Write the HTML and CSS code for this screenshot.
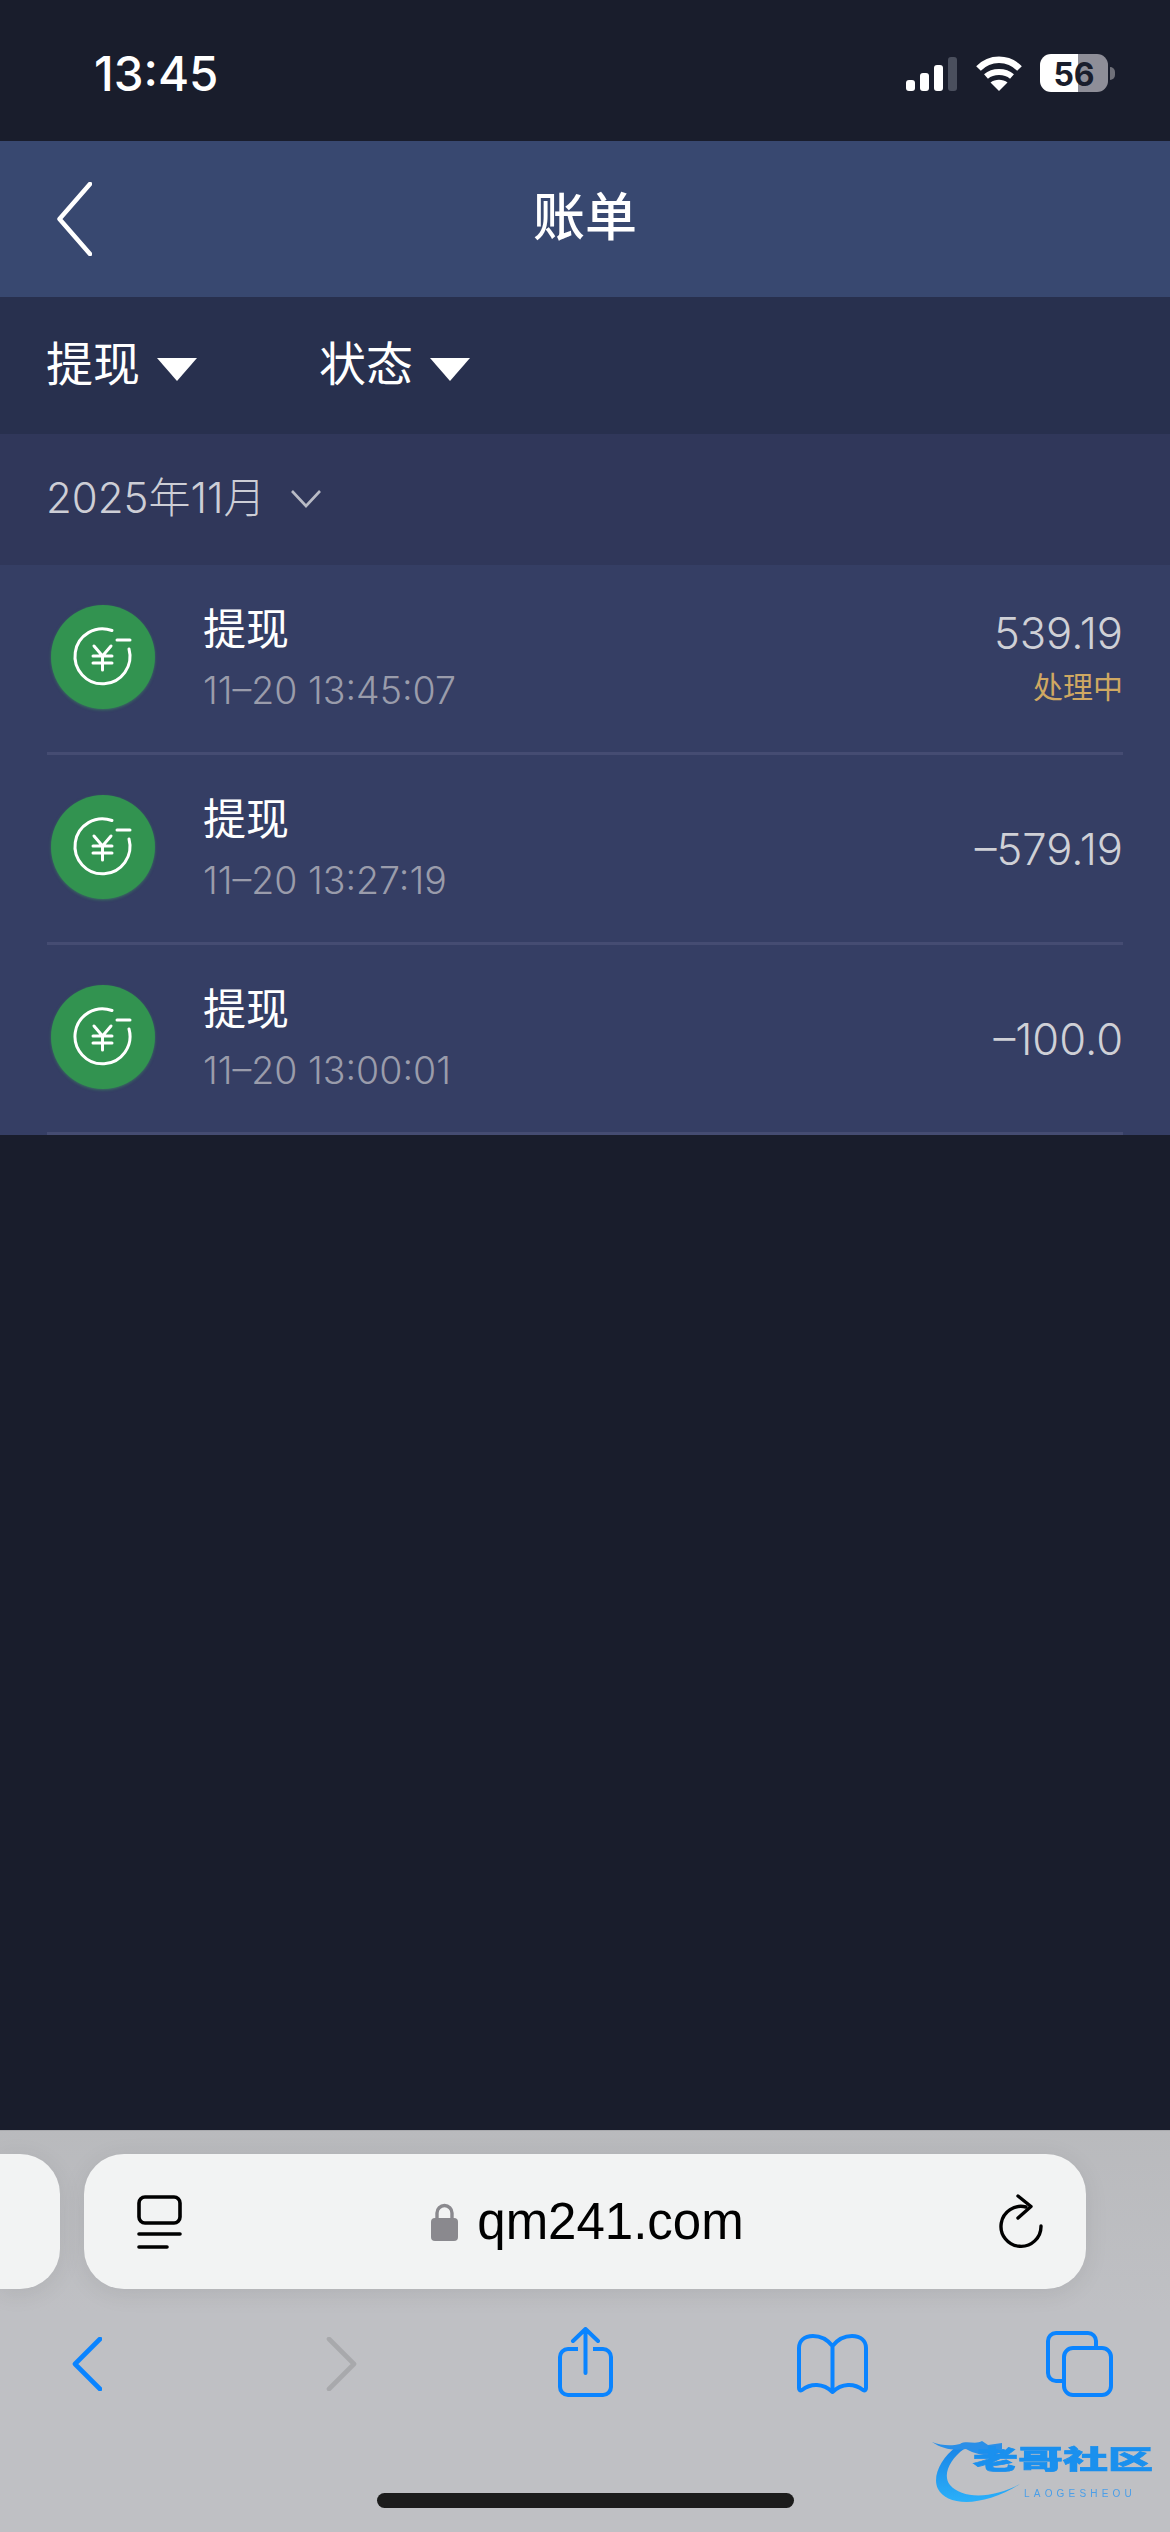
FILE: index.html

```html
<!DOCTYPE html>
<html lang="zh-CN">
<head>
    <meta charset="UTF-8">
    <title>账单</title>
    <meta name="viewport" content="width=device-width, initial-scale=1.0">
    <link rel="stylesheet" href="styles.css">
</head>
<body>
<div class="page">

    <!-- status bar -->
    <div class="status">
        <span class="clock">13:45</span>
        <div class="status-icons">
            <div class="signal">
                <i class="bar1"></i><i class="bar2"></i><i class="bar3"></i><i class="bar4"></i>
            </div>
            <svg class="wifi" width="48" height="35" viewBox="0 0 48 35">
                <path d="M3.5 12.5C15 .8 33 .8 44.5 12.5" fill="none" stroke="#fff" stroke-width="6.5"/>
                <path d="M11 20.5C18 14.5 30 14.5 37 20.5" fill="none" stroke="#fff" stroke-width="6"/>
                <path d="M24 35L15.5 26.5C20 22.8 28 22.8 32.5 26.5Z" fill="#fff"/>
            </svg>
            <div class="battery">
                <div class="battery-body"><span>56</span></div>
                <div class="battery-tip"></div>
            </div>
        </div>
    </div>

    <div class="header">
        <svg class="back" width="37" height="74" viewBox="0 0 37 74">
            <path d="M35 2L4.5 37L35 72" fill="none" stroke="#fff" stroke-width="4.5" stroke-linecap="round" stroke-linejoin="round"/>
        </svg>
        <h1>账单</h1>
    </div>

    <div class="filters">
        <div class="filter filter-type">提现<span class="tri"></span></div>
        <div class="filter">状态<span class="tri"></span></div>
    </div>

    <div class="month">
        <span>2025年11月</span>
        <svg width="32" height="19" viewBox="0 0 32 19">
            <path d="M2 2L16 17L30 2" fill="none" stroke="#b9bbc6" stroke-width="2.6"/>
        </svg>
    </div>

    <div class="list">
        <div class="row">
            <div class="coin">
                <svg width="104" height="104" viewBox="0 0 104 104"><use href="#yuan"/></svg>
            </div>
            <div class="info">
                <div class="name">提现</div>
                <div class="date">11–20 13:45:07</div>
            </div>
            <div class="money">
                <div class="amount">539.19</div>
                <div class="state">处理中</div>
            </div>
        </div>
        <div class="row">
            <div class="coin">
                <svg width="104" height="104" viewBox="0 0 104 104"><use href="#yuan"/></svg>
            </div>
            <div class="info">
                <div class="name">提现</div>
                <div class="date">11–20 13:27:19</div>
            </div>
            <div class="money">
                <div class="amount">–579.19</div>
            </div>
        </div>
        <div class="row">
            <div class="coin">
                <svg width="104" height="104" viewBox="0 0 104 104"><use href="#yuan"/></svg>
            </div>
            <div class="info">
                <div class="name">提现</div>
                <div class="date">11–20 13:00:01</div>
            </div>
            <div class="money">
                <div class="amount">–100.0</div>
            </div>
        </div>
    </div>

    <div class="empty"></div>

    <!-- safari toolbar -->
    <div class="browser">
        <div class="address-row">
            <div class="prev-tab"></div>
            <div class="address">
                <svg width="45" height="54" viewBox="0 0 45 54">
                    <rect x="2" y="2" width="41" height="26" rx="6" fill="none" stroke="#000" stroke-width="3.6"/>
                    <path d="M2 39H43M2 52H30" fill="none" stroke="#000" stroke-width="3.6" stroke-linecap="round"/>
                </svg>
                <div class="url">
                    <svg width="27" height="38" viewBox="0 0 27 38">
                        <path d="M6 16V10a7.500 7.500 0 0 1 15 0v6" fill="none" stroke="#8a898e" stroke-width="3.4"/>
                        <rect x="0" y="15" width="27" height="23" rx="4" fill="#8a898e"/>
                    </svg>
                    <span>qm241.com</span>
                </div>
                <svg width="46" height="55" viewBox="0 0 46 55">
                    <path d="M28 13A20 20 0 1 0 43 32" fill="none" stroke="#000" stroke-width="3.4" stroke-linecap="round"/>
                    <path d="M20 2L33 12.500L20 24" fill="none" stroke="#000" stroke-width="3.4" stroke-linecap="round" stroke-linejoin="round"/>
                </svg>
            </div>
        </div>
        <div class="tools">
            <svg class="tool-back" width="30" height="54" viewBox="0 0 30 54">
                <path d="M28 2L3 27L28 52" fill="none" stroke="#0a84ff" stroke-width="4.600" stroke-linecap="round" stroke-linejoin="round"/>
            </svg>
            <svg class="tool-forward" width="31" height="54" viewBox="0 0 31 54">
                <path d="M3 2L28 27L3 52" fill="none" stroke="#a8a9ac" stroke-width="4.600" stroke-linecap="round" stroke-linejoin="round"/>
            </svg>
            <svg class="tool-share" width="55" height="71" viewBox="0 0 55 71">
                <path d="M20 22H10a8 8 0 0 0-8 8V60a8 8 0 0 0 8 8H45a8 8 0 0 0 8-8V30a8 8 0 0 0-8-8H35" fill="none" stroke="#0a84ff" stroke-width="4"/>
                <path d="M27.500 46V3M15 14L27.500 2L40 14" fill="none" stroke="#0a84ff" stroke-width="4" stroke-linecap="round" stroke-linejoin="round"/>
            </svg>
            <svg class="tool-book" width="71" height="60" viewBox="0 0 71 60">
                <path d="M35.500 12C30 5 23 2 16 2C7 2 2 7 2 14V54C2 56 3 57 5 56C14 49 26 49 35.500 58C45 49 57 49 66 56C68 57 69 56 69 54V14C69 7 64 2 55 2C48 2 41 5 35.500 12V58" fill="none" stroke="#0a84ff" stroke-width="4" stroke-linejoin="round"/>
            </svg>
            <svg class="tool-tabs" width="67" height="66" viewBox="0 0 67 66">
                <path d="M50 15V10a8 8 0 0 0-8-8H10a8 8 0 0 0-8 8V42a8 8 0 0 0 8 8H17" fill="none" stroke="#0a84ff" stroke-width="4"/>
                <rect x="18" y="17" width="47" height="47" rx="9" fill="none" stroke="#0a84ff" stroke-width="4"/>
            </svg>
        </div>
        <div class="home-row"><div class="home-bar"></div></div>

        <!-- watermark sits over the toolbar corner -->
        <div class="mark">
            <svg width="100" height="72" viewBox="0 0 100 72">
                <defs>
                    <linearGradient id="markFill" x1="0" y1="0" x2="0" y2="1">
                        <stop offset="0" stop-color="#1a84e6"/>
                        <stop offset="1" stop-color="#2ab0fa"/>
                    </linearGradient>
                </defs>
                <path d="M25 9C8 22 0 40 6 52C14 68 48 72 88 47C60 62 30 62 18 48C10 38 18 22 32 12Z" fill="url(#markFill)"/>
                <path d="M0 5C10 9 20 9 28 7C34 3 44 8 50 4L56 8L70 6L70 12L60 14L70 18C58 20 44 18 34 12C22 14 10 12 0 5Z" fill="#2a8fe8"/>
            </svg>
            <div class="mark-name">老哥社区</div>
            <div class="mark-sub">LAOGESHEOU</div>
        </div>
    </div>
</div>

<svg class="defs" width="0" height="0">
    <defs>
        <g id="yuan" fill="none" stroke="#fff" stroke-linecap="round">
            <path d="M61 25.500A27.500 27.500 0 1 0 78 44" stroke-width="3"/>
            <path d="M66 35H79" stroke-width="3"/>
            <path d="M43 41L51.500 51L60 41M42 51H61M42 58H61M51.500 51V65" stroke-width="3"/>
        </g>
    </defs>
</svg>
</body>
</html>
```

FILE: styles.css

```css
body { margin: 0; background-color: #191d2c; font-family: Inter, "Noto Sans CJK SC", sans-serif; }
svg { display: block; flex: none; }
.defs { position: absolute; }
.page { width: 1170px; height: 2532px; display: flex; flex-direction: column; overflow: hidden; }

.status { height: 141px; flex: none; box-sizing: border-box; padding: 50px 55px 0 94px; display: flex; justify-content: space-between; align-items: flex-start; color: #fff; }
.clock { font-size: 47.5px; font-weight: 500; line-height: 48px; }
.status-icons { display: flex; align-items: flex-start; margin-top: 4px; }
.signal { display: flex; align-items: flex-end; gap: 5px; height: 34px; margin-top: 3px; }
.signal i { width: 9px; border-radius: 3px; background: #fff; }
.bar1 { height: 11px; }
.bar2 { height: 18px; }
.bar3 { height: 26px; }
.signal .bar4 { height: 34px; background: #4a4f5d; }
.wifi { margin: 2px 17px 0 18px; }
.battery { display: flex; align-items: center; height: 38px; }
.battery-body { width: 68px; height: 38px; border-radius: 11px; background: linear-gradient(to right, #fff 38px, #8e8e98 38px); color: #191d2c; font-size: 32px; font-weight: 700; line-height: 41px; text-align: center; }
.battery-tip { width: 5px; height: 13px; margin-left: 2px; border-radius: 0 6px 6px 0; background: #6f7079; }

.header { height: 156px; flex: none; box-sizing: border-box; padding: 0 0 1px 55px; position: relative; display: flex; align-items: center; background: #384870; }
.header h1 { position: absolute; left: 0; right: 0; top: 42px; margin: 0; text-align: center; color: #fff; font-size: 52px; line-height: 70px; font-weight: 500; }

.filters { height: 137px; flex: none; box-sizing: border-box; padding: 0 0 10px 46px; display: flex; align-items: center; background: #28304e; color: #fff; font-size: 47px; font-weight: 400; }
.filter { display: flex; align-items: center; }
.filter-type { width: 273px; }
.tri { width: 0; height: 0; margin-left: 17px; margin-top: 17px; border-left: 20px solid transparent; border-right: 20px solid transparent; border-top: 23px solid #fff; }

.month { height: 131px; flex: none; box-sizing: border-box; padding: 0 0 10px 46px; display: flex; align-items: center; gap: 25px; background: #30375a; color: #cdced6; font-size: 42px; font-weight: 300; }
.month svg { margin-top: 8px; }

.list { flex: none; background: #353e64; }
.row { height: 190px; box-sizing: border-box; margin: 0 47px; border-bottom: 3px solid #454c72; display: flex; align-items: center; }
.coin { width: 104px; height: 104px; margin: 0 0 3px 4px; border-radius: 50%; background: #329350; box-shadow: 0 1px 3px rgba(60, 170, 90, .5); }
.info { margin: 0 0 2px 48px; flex: 1; }
.name { color: #fff; font-size: 43px; line-height: 56px; font-weight: 400; }
.date { color: #9a9cab; font-size: 37.5px; line-height: 46px; font-weight: 300; margin-top: 11px; }
.money { text-align: right; }
.amount { color: #cfd0d6; font-size: 43.5px; font-weight: 300; line-height: 52px; }
.state { color: #cfa862; font-size: 30px; line-height: 40px; font-weight: 400; margin: 8px 0 4px; }

.empty { flex: 1; background: #191d2c; }

.browser { height: 402px; flex: none; position: relative; background: linear-gradient(#b9babd, #bfc0c4 45%); border-top: 1px solid #a9aaae; box-sizing: border-box; }
.address-row { display: flex; gap: 24px; padding-top: 23px; }
.prev-tab { width: 60px; height: 135px; border-radius: 0 40px 40px 0; background: #f2f3f3; box-shadow: 0 4px 24px rgba(0, 0, 0, .08); }
.address { width: 1002px; height: 135px; box-sizing: border-box; padding: 0 42px 0 53px; display: flex; align-items: center; justify-content: space-between; border-radius: 40px; background: #f2f3f3; box-shadow: 0 4px 24px rgba(0, 0, 0, .08); }
.url { display: flex; align-items: center; gap: 19px; margin-left: -5px; }
.url span { color: #000; font-family: "Liberation Sans", sans-serif; font-size: 51px; }

.tools { display: flex; align-items: flex-start; padding: 38px 0 0 72px; height: 70px; }
.tool-back { margin-top: 10px; }
.tool-forward { margin: 10px 0 0 224px; }
.tool-share { margin-left: 201px; }
.tool-book { margin: 7px 0 0 184px; }
.tool-tabs { margin: 4px 0 0 178px; }

.home-row { display: flex; justify-content: center; padding-top: 96px; }
.home-bar { width: 417px; height: 15px; border-radius: 8px; background: #1c1c1c; }

.mark { position: absolute; left: 932px; top: 306px; width: 222px; height: 72px; filter: blur(.7px); }
.mark-name { position: absolute; left: 41px; top: 8px; font-family: "Noto Sans CJK SC", sans-serif; font-size: 45px; line-height: 45px; font-weight: 900; white-space: nowrap; color: #1a90ee; -webkit-text-stroke: 1.2px #1a90ee; transform: scaleY(.58); transform-origin: left top; }
.mark-sub { position: absolute; left: 92px; top: 52px; color: #4a9ee8; font-family: "Liberation Sans", sans-serif; font-size: 10px; line-height: 10px; letter-spacing: 4.2px; white-space: nowrap; }
```
